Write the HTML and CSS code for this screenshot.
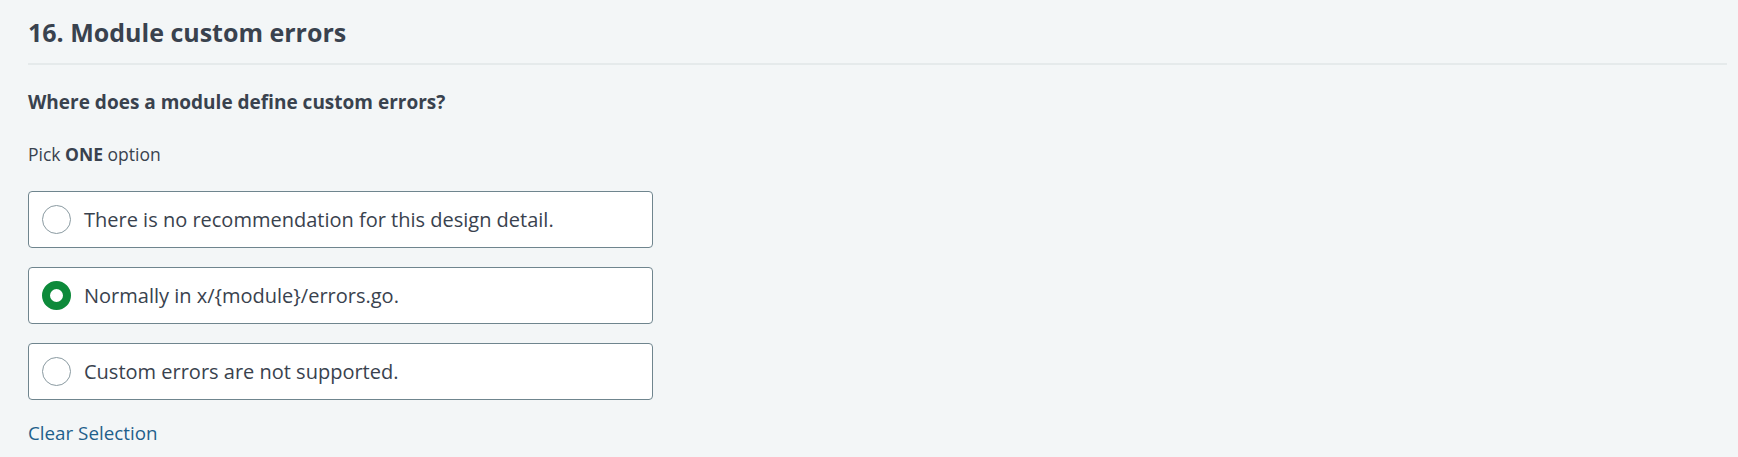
FILE: index.html
```html
<!DOCTYPE html>
<html lang="en">
<head>
<meta charset="utf-8">
<title>Module custom errors</title>
<link rel="stylesheet" href="styles.css">
</head>
<body>
<main class="page">
  <header class="q-header">
    <h1 class="q-title">16. Module custom errors</h1>
  </header>
  <section class="q-body">
    <h2 class="q-prompt">Where does a module define custom errors?</h2>
    <p class="q-hint">Pick <strong>ONE</strong> option</p>
    <div class="options">
      <label class="option">
        <span class="radio"></span>
        <span class="option-text">There is no recommendation for this design detail.</span>
      </label>
      <label class="option">
        <span class="radio radio-checked"></span>
        <span class="option-text">Normally in x/{module}/errors.go.</span>
      </label>
      <label class="option">
        <span class="radio"></span>
        <span class="option-text">Custom errors are not supported.</span>
      </label>
    </div>
    <a class="clear" href="#">Clear Selection</a>
  </section>
</main>
</body>
</html>
```
FILE: styles.css
```css
* { box-sizing: border-box; }
html, body {
  margin: 0;
  background: #f3f6f7;
}
body {
  font-family: "Open Sans", "Noto Sans", sans-serif;
  color: #39424e;
}
.page {
  padding: 0 11px 0 28px;
}
.q-header {
  padding-top: 14px;
  padding-bottom: 13px;
  border-bottom: 2px solid #e5eaeb;
}
.q-title {
  margin: 0;
  font-size: 25px;
  line-height: 36px;
  font-weight: 700;
}
.q-body {
  width: 625px;
}
.q-prompt {
  margin: 23px 0 0;
  font-size: 19px;
  line-height: 28px;
  font-weight: 700;
}
.q-hint {
  margin: 26px 0 0;
  font-size: 17.5px;
  line-height: 25px;
}
.q-hint strong { font-weight: 700; }
.options {
  margin-top: 24px;
  display: flex;
  flex-direction: column;
  gap: 19px;
}
.option {
  display: flex;
  align-items: center;
  gap: 13px;
  height: 57px;
  padding: 0 13px;
  background: #fff;
  border: 1px solid #6f858e;
  border-radius: 4px;
  font-size: 20px;
  line-height: 27px;
  cursor: pointer;
}
.radio {
  flex: none;
  width: 29px;
  height: 29px;
  border-radius: 50%;
  border: 1px solid #8a9aa1;
  background: #fff;
}
.radio-checked {
  border: 8px solid #0d8a3a;
}
.clear {
  display: inline-block;
  margin-top: 20px;
  font-size: 18.8px;
  line-height: 26px;
  color: #1f5f8b;
  text-decoration: none;
}
```
